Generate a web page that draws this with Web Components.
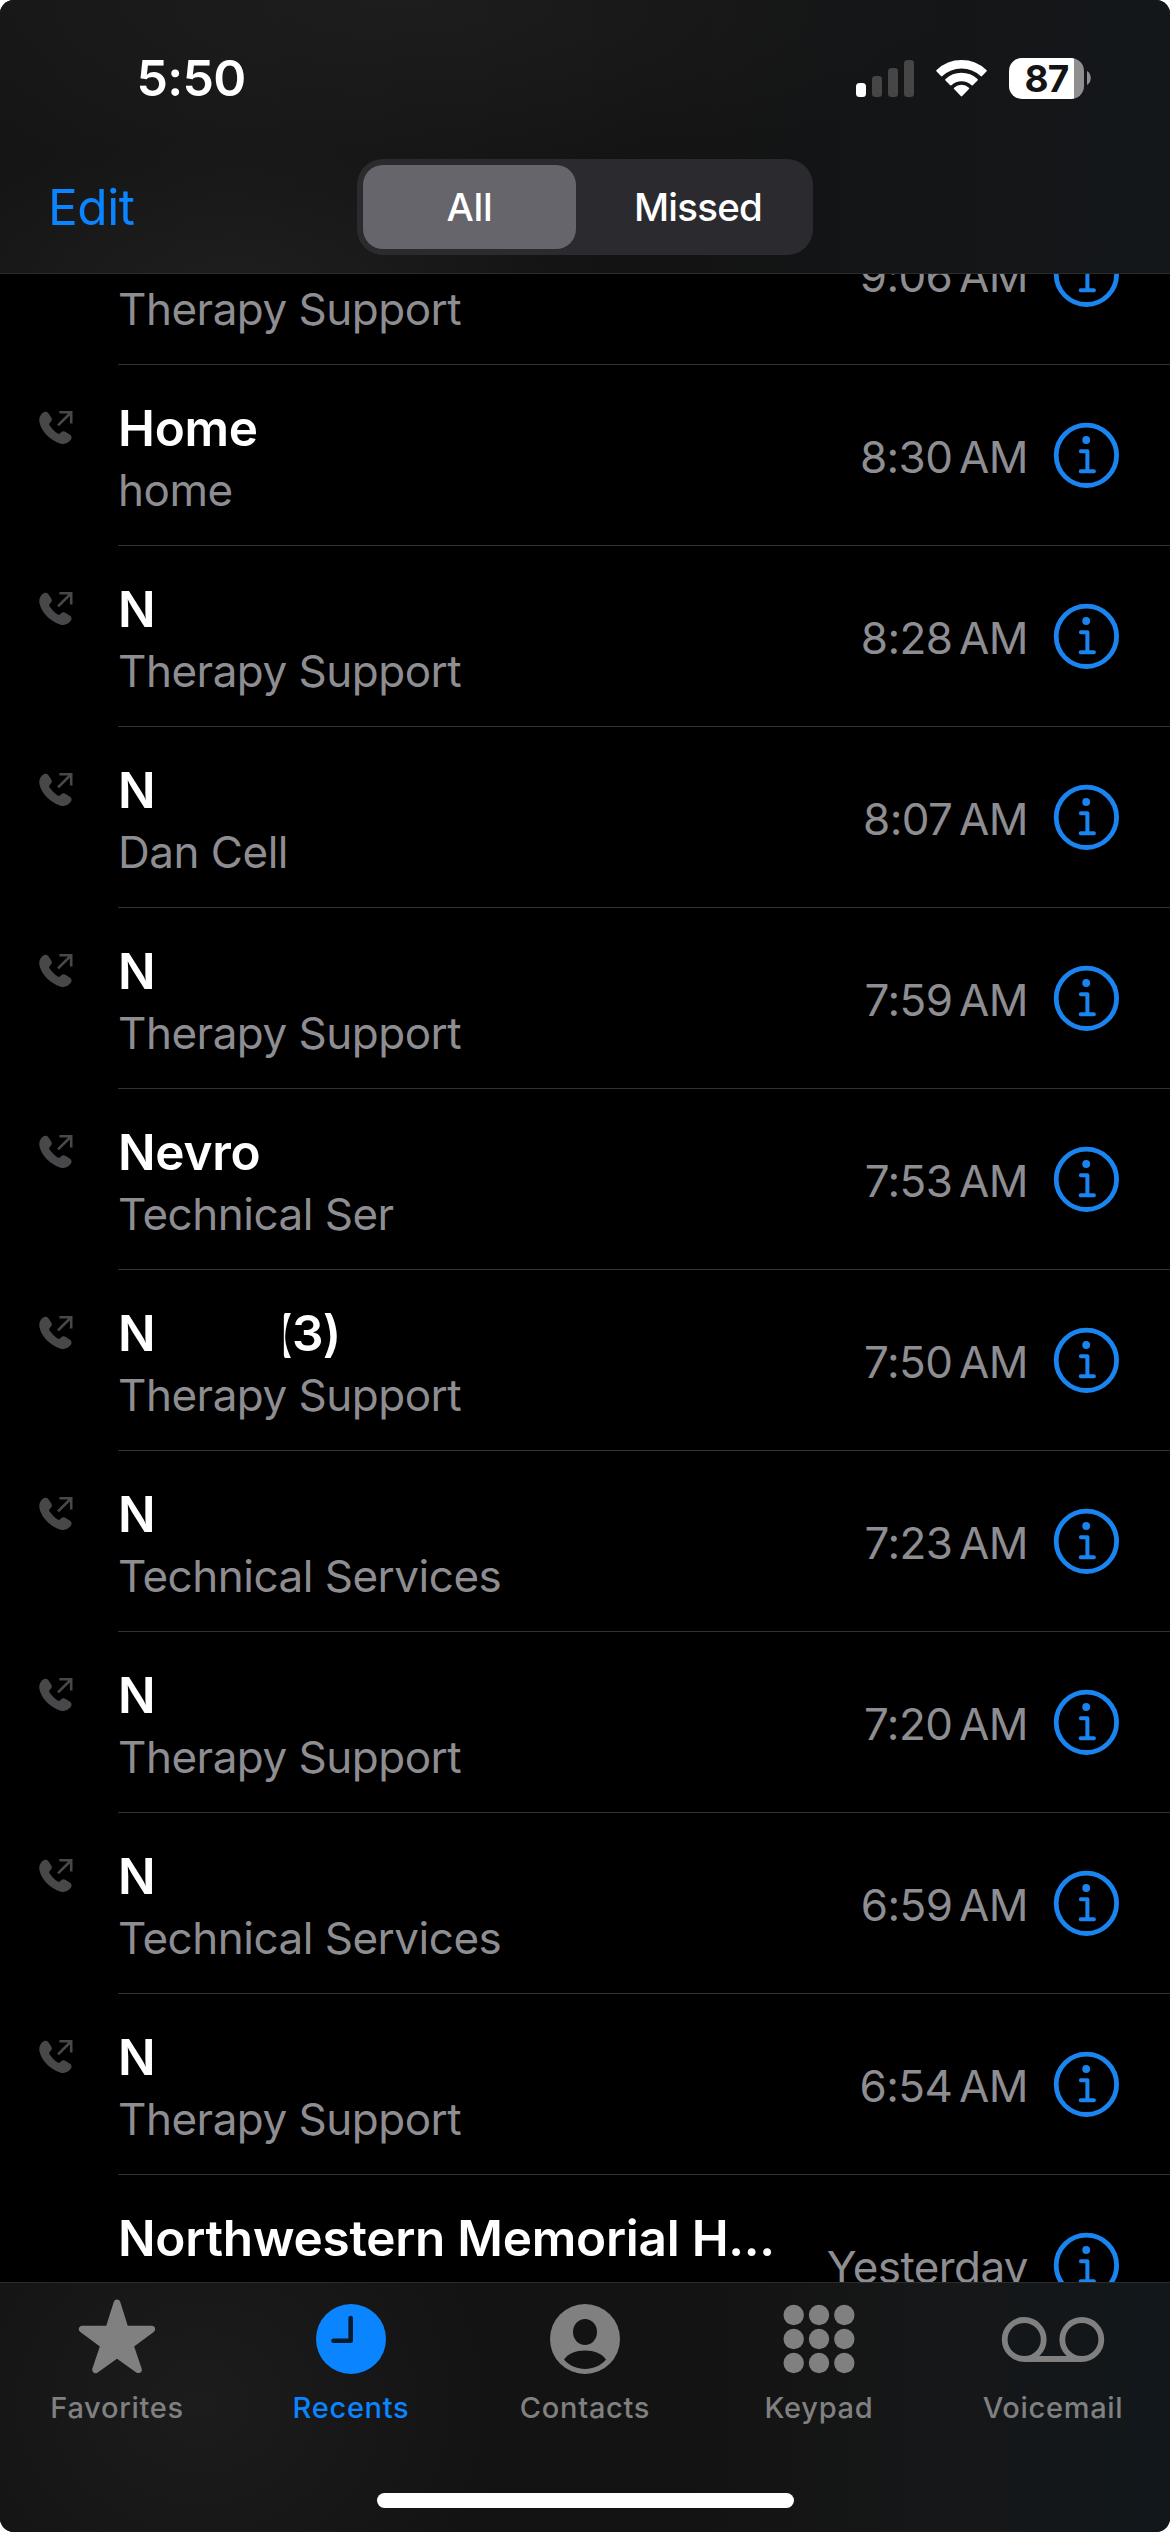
<!DOCTYPE html>
<html lang="en">
<head>
<meta charset="utf-8">
<title>Recents</title>
<style>
  html, body {
    margin: 0;
    background: #fff;
  }
  body {
    font-family: Inter, "Liberation Sans", sans-serif;
    color: #fff;
  }
</style>
</head>
<body>
<phone-screen>
  <status-bar slot="top" time="5:50" battery="87"></status-bar>
  <nav-bar slot="top">
    <span slot="action">Edit</span>
    <segmented-control>
      <segment-item selected>All</segment-item>
      <segment-item>Missed</segment-item>
    </segmented-control>
  </nav-bar>

  <call-row time="9:06 AM"><span slot="label">Therapy Support</span></call-row>
  <call-row time="8:30 AM" outgoing>Home<span slot="label">home</span></call-row>
  <call-row time="8:28 AM" outgoing>N<span slot="label">Therapy Support</span></call-row>
  <call-row time="8:07 AM" outgoing>N<span slot="label">Dan Cell</span></call-row>
  <call-row time="7:59 AM" outgoing>N<span slot="label">Therapy Support</span></call-row>
  <call-row time="7:53 AM" outgoing>Nevro<span slot="label">Technical Ser</span></call-row>
  <call-row time="7:50 AM" outgoing count="(3)">N<span slot="label">Therapy Support</span></call-row>
  <call-row time="7:23 AM" outgoing>N<span slot="label">Technical Services</span></call-row>
  <call-row time="7:20 AM" outgoing>N<span slot="label">Therapy Support</span></call-row>
  <call-row time="6:59 AM" outgoing>N<span slot="label">Technical Services</span></call-row>
  <call-row time="6:54 AM" outgoing>N<span slot="label">Therapy Support</span></call-row>
  <call-row time="Yesterday">Northwestern Memorial H...</call-row>

  <tab-bar slot="bottom">
    <tab-item icon="star">Favorites</tab-item>
    <tab-item icon="clock" selected>Recents</tab-item>
    <tab-item icon="person">Contacts</tab-item>
    <tab-item icon="keypad">Keypad</tab-item>
    <tab-item icon="voicemail">Voicemail</tab-item>
  </tab-bar>
</phone-screen>

<script>
class PhoneScreen extends HTMLElement {
  constructor() {
    super();
    this.attachShadow({ mode: 'open' });
    this.shadowRoot.innerHTML = `
      <style>
        :host {
          display: flex;
          flex-direction: column;
          width: 1170px;
          height: 2532px;
          background: #000;
          border-radius: 14px;
          overflow: hidden;
        }
        header {
          flex: none;
          box-sizing: border-box;
          height: 274px;
          border-bottom: 1px solid #2b2b2c;
          background:
            radial-gradient(ellipse 330px 150px at 230px 290px, #1e1e1e, transparent),
            radial-gradient(ellipse 560px 190px at 400px 0, #1d1d1d, transparent),
            linear-gradient(90deg, #151515, #171717 20%, #131313 55%, #14171a);
        }
        main {
          flex: 1;
          min-height: 0;
          overflow: hidden;
        }
        /* the list is scrolled part of a row under the header */
        .list {
          margin-top: -90px;
        }
      </style>
      <header><slot name="top"></slot></header>
      <main><div class="list"><slot></slot></div></main>
      <slot name="bottom"></slot>
    `;
  }
}

class StatusBar extends HTMLElement {
  constructor() {
    super();
    this.attachShadow({ mode: 'open' });
  }

  connectedCallback() {
    this.shadowRoot.innerHTML = `
      <style>
        :host {
          display: flex;
          align-items: center;
          justify-content: space-between;
          box-sizing: border-box;
          height: 156px;
          padding: 0 79px 0 136.5px;
        }
        .time {
          font-size: 50px;
          font-weight: 600;
          letter-spacing: -0.7px;
        }
        .icons {
          display: flex;
          align-items: center;
        }
        svg { display: block; }
        .wifi { margin: 0 22px; }
        .battery {
          display: flex;
          align-items: center;
          justify-content: center;
          box-sizing: border-box;
          width: 75px;
          height: 41px;
          border-radius: 13px;
          background: linear-gradient(90deg, #fff 65px, #8f8f8f 65px);
          color: #141414;
          font-size: 37px;
          font-weight: 700;
          letter-spacing: -0.8px;
        }
        .nub { margin-left: 3px; }
      </style>
      <span class="time">${this.getAttribute('time')}</span>
      <div class="icons">
        <svg width="58" height="37">
          <rect x="0" y="23" width="10" height="14" rx="3.5" fill="#fff"/>
          <rect x="16" y="16" width="10" height="21" rx="3.5" fill="#464646"/>
          <rect x="32" y="8" width="10" height="29" rx="3.5" fill="#464646"/>
          <rect x="48" y="0" width="10" height="37" rx="3.5" fill="#464646"/>
        </svg>
        <svg class="wifi" width="51" height="37" viewBox="0 0 51 37">
          <g fill="#fff" stroke="#fff" stroke-width="2" stroke-linejoin="round">
            <path d="M1.3 10.8A35 35 0 0 1 49.7 10.8L45.3 15.4A28.7 28.7 0 0 0 5.7 15.4Z"/>
            <path d="M10.2 19.8A22.5 22.5 0 0 1 40.8 19.8L36.3 24.4A16 16 0 0 0 14.7 24.4Z"/>
            <path d="M18.8 28.4A9.8 9.8 0 0 1 32.2 28.4L25.5 35.4Z"/>
          </g>
        </svg>
        <div class="battery">${this.getAttribute('battery')}</div>
        <svg class="nub" width="4" height="14"><path d="M0 0C5 3 5 11 0 14Z" fill="#8f8f8f"/></svg>
      </div>
    `;
  }
}

class NavBar extends HTMLElement {
  constructor() {
    super();
    this.attachShadow({ mode: 'open' });
    this.shadowRoot.innerHTML = `
      <style>
        :host {
          display: grid;
          grid-template-columns: 1fr auto 1fr;
          align-items: center;
          height: 102px;
          padding: 0 48px;
        }
        .action {
          color: #0a84ff;
          font-size: 49.5px;
          letter-spacing: -0.4px;
        }
      </style>
      <div class="action"><slot name="action"></slot></div>
      <slot></slot>
    `;
  }
}

class SegmentedControl extends HTMLElement {
  constructor() {
    super();
    this.attachShadow({ mode: 'open' });
    this.shadowRoot.innerHTML = `
      <style>
        :host {
          display: grid;
          grid-template-columns: 213px 1fr;
          gap: 13px;
          box-sizing: border-box;
          width: 456px;
          height: 96px;
          padding: 6px;
          border-radius: 26px;
          background: #2b2b2f;
        }
      </style>
      <slot></slot>
    `;
  }
}

class SegmentItem extends HTMLElement {
  constructor() {
    super();
    this.attachShadow({ mode: 'open' });
    this.shadowRoot.innerHTML = `
      <style>
        :host {
          display: flex;
          align-items: center;
          justify-content: center;
          border-radius: 20px;
          font-size: 38.5px;
          font-weight: 450;
          letter-spacing: -0.8px;
        }
        :host([selected]) {
          background: #66656b;
          font-weight: 500;
          letter-spacing: -0.2px;
        }
      </style>
      <slot></slot>
    `;
  }
}

class CallRow extends HTMLElement {
  constructor() {
    super();
    this.attachShadow({ mode: 'open' });
  }

  connectedCallback() {
    const phone = `
      <svg width="34" height="34" viewBox="0 0 34 34">
        <path fill="#48484a" d="M4.2 1.4C5.8.2 8 .4 9.2 2L12.2 6.6C13.2 8.2 13 9.6 11.8 10.8L10.6 12.2C10 13 10 13.6 10.6 14.6C12.4 17.4 15.4 20.4 18.6 22.4C19.6 23 20.2 23 21 22.4L22.2 21.2C23.4 20 24.8 19.8 26.4 20.8L31 23.8C32.8 25 33 27.2 31.8 28.8C29 32.4 25.6 33.8 21 32.4C11 29.4 2.6 20.4.6 11.8C-.4 7.4.8 4 4.2 1.4Z"/>
        <path fill="none" stroke="#48484a" stroke-width="2.6" d="M20.4 1.3H32.2V12.4M32 1.5L19 14.4"/>
      </svg>`;
    const count = this.getAttribute('count');
    this.shadowRoot.innerHTML = `
      <style>
        :host {
          display: grid;
          grid-template-columns: 118px 1fr;
          height: 181px;
        }
        .kind {
          padding: 46px 0 0 39px;
        }
        svg { display: block; }
        .body {
          display: flex;
          align-items: center;
          min-width: 0;
          border-bottom: 1px solid #323234;
          padding-right: 51px;
        }
        .text {
          flex: 1;
          align-self: flex-start;
          padding-top: 33px;
          white-space: nowrap;
        }
        .name {
          height: 60px;
          line-height: 60px;
          font-size: 49.5px;
          font-weight: 600;
          letter-spacing: -0.25px;
        }
        .label {
          height: 60px;
          margin-top: 2px;
          line-height: 60px;
          font-size: 44px;
          letter-spacing: -0.5px;
          color: #8d8d92;
        }
        /* the left edge of the count is cut off by the blanked part of the name */
        .count {
          display: inline-block;
          margin-left: 119px;
          letter-spacing: -0.8px;
          clip-path: inset(0 0 0 9.5px);
        }
        .time {
          padding-top: 3px;
          margin-right: 25px;
          font-size: 44px;
          letter-spacing: -0.6px;
          word-spacing: -5px;
          color: #8d8d92;
        }
      </style>
      <div class="kind">${this.hasAttribute('outgoing') ? phone : ''}</div>
      <div class="body">
        <div class="text">
          <div class="name"><slot></slot>${count ? `<span class="count">${count}</span>` : ''}</div>
          <div class="label"><slot name="label"></slot></div>
        </div>
        <div class="time">${this.getAttribute('time')}</div>
        <svg width="66" height="66" viewBox="0 0 66 66" fill="none" stroke="#1a84f0" stroke-linecap="round" stroke-linejoin="round">
          <circle cx="33.4" cy="33.3" r="30.2" stroke-width="4.8"/>
          <circle cx="33.2" cy="18" r="3.9" fill="#1a84f0" stroke="none"/>
          <path stroke-width="4" d="M27.9 29.3H34.4V49.2M27.7 49.2H40.9"/>
        </svg>
      </div>
    `;
  }
}

class TabBar extends HTMLElement {
  constructor() {
    super();
    this.attachShadow({ mode: 'open' });
    this.shadowRoot.innerHTML = `
      <style>
        :host {
          display: flex;
          flex-direction: column;
          align-items: center;
          flex: none;
          box-sizing: border-box;
          height: 250px;
          border-top: 1px solid #2c2c2d;
          background:
            radial-gradient(ellipse 300px 260px at 200px 120px, #1c1c1c, transparent),
            linear-gradient(90deg, #131313, #131313 60%, #161718 80%, #11171b);
        }
        .tabs {
          display: grid;
          grid-template-columns: repeat(5, 1fr);
          width: 100%;
          height: 210px;
        }
        .home {
          width: 417px;
          height: 15px;
          border-radius: 8px;
          background: #fff;
        }
      </style>
      <div class="tabs"><slot></slot></div>
      <div class="home"></div>
    `;
  }
}

// every glyph is drawn in a 110x90 box centred on 55,45
const tabIcons = {
  star: '<path stroke="currentColor" stroke-width="7" stroke-linejoin="round" d="M55 9.2L63.2 35.2L89.6 35.2L68 51.2L76.3 75.6L55 60.3L33.7 75.6L42 51.2L20.4 35.2L46.8 35.2Z"/>',
  clock: '<circle cx="55" cy="45" r="35"/><path fill="none" stroke="#0b1a2c" stroke-width="4.6" stroke-linecap="round" stroke-linejoin="round" d="M54.7 24V46.7H37.5"/>',
  person: '<circle cx="55" cy="45" r="35"/><ellipse cx="55" cy="38" rx="12" ry="13" fill="#131313"/><path fill="#131313" d="M34 65.5C38 59.5 46 56.5 55 56.5S72 59.5 76 65.5C71 71.5 63 75 55 75S39 71.5 34 65.5Z"/>',
  keypad: [21, 45, 69].map(y => [29.7, 55, 80.3].map(x => `<circle cx="${x}" cy="${y}" r="10.2"/>`).join('')).join(''),
  voicemail: '<g fill="none" stroke="currentColor" stroke-width="5.8"><circle cx="26.2" cy="45.500" r="19.5"/><circle cx="83.8" cy="45.500" r="19.5"/><path d="M26 65H84"/></g>'
};

class TabItem extends HTMLElement {
  constructor() {
    super();
    this.attachShadow({ mode: 'open' });
  }

  connectedCallback() {
    this.shadowRoot.innerHTML = `
      <style>
        :host {
          display: flex;
          flex-direction: column;
          align-items: center;
          padding-top: 11px;
          color: #808080;
          font-size: 29px;
          font-weight: 500;
          letter-spacing: 0.7px;
          line-height: 36px;
        }
        :host([selected]) {
          color: #0a84ff;
        }
        svg {
          display: block;
          margin-bottom: 6px;
        }
      </style>
      <svg width="110" height="90" viewBox="0 0 110 90" fill="currentColor">${tabIcons[this.getAttribute('icon')]}</svg>
      <slot></slot>
    `;
  }
}

customElements.define('phone-screen', PhoneScreen);
customElements.define('status-bar', StatusBar);
customElements.define('nav-bar', NavBar);
customElements.define('segmented-control', SegmentedControl);
customElements.define('segment-item', SegmentItem);
customElements.define('call-row', CallRow);
customElements.define('tab-bar', TabBar);
customElements.define('tab-item', TabItem);
</script>
</body>
</html>
